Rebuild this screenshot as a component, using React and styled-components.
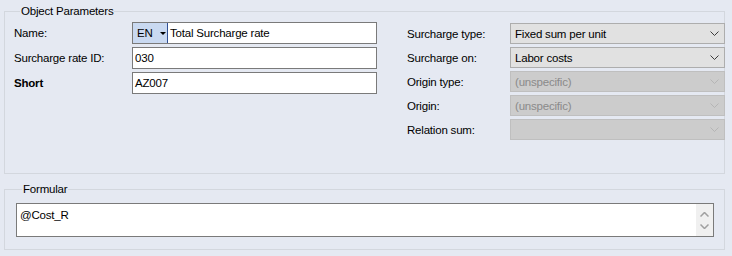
import React from "react";
import styled, { createGlobalStyle } from "styled-components";

const GlobalStyle = createGlobalStyle`
  html, body { margin: 0; padding: 0; }
  body {
    background: #e5e9f2;
    font-family: "Liberation Sans", Arial, sans-serif;
    font-size: 11.5px;
    letter-spacing: -0.2px;
    color: #000;
  }
  * { box-sizing: border-box; }
`;

const Page = styled.div`
  width: 732px;
  height: 256px;
  padding: 4px 7px 0 4px;
  display: flex;
  flex-direction: column;
  gap: 8px;
`;

const GroupBox = styled.fieldset`
  margin: 0;
  min-width: 0;
  border: 1px solid #d3d7de;
  padding: ${(p) => p.$pad};
  height: ${(p) => p.$height}px;
`;

const Legend = styled.legend`
  margin-left: 6px;
  padding: 0 1px;
  line-height: 14px;
  font-size: 11.5px;
`;

const Columns = styled.div`
  display: flex;
  align-items: flex-start;
`;

const Column = styled.div`
  display: flex;
  flex-direction: column;
  gap: 3px;
  width: ${(p) => (p.$width ? `${p.$width}px` : "auto")};
  flex: ${(p) => (p.$width ? "none" : "1")};
  margin-left: ${(p) => p.$offset || 0}px;
  margin-top: ${(p) => p.$top || 0}px;
  margin-right: ${(p) => p.$right || 0}px;
`;

const Row = styled.div`
  display: grid;
  grid-template-columns: ${(p) => p.$label}px 1fr;
  align-items: center;
  height: ${(p) => p.$h}px;
`;

const Label = styled.span`
  font-weight: ${(p) => (p.$bold ? 700 : 400)};
  white-space: nowrap;
`;

const Field = styled.div`
  height: 100%;
  background: #fff;
  border: 1px solid #7a7a7a;
  display: flex;
  align-items: center;
  padding: 0 ${(p) => (p.$flush ? 0 : 2)}px;
  white-space: nowrap;
  overflow: hidden;
`;

const LangButton = styled.div`
  height: 100%;
  width: 35px;
  background: #c9d9f1;
  border-right: 1px solid #2f4f96;
  display: flex;
  align-items: center;
  padding-left: 4px;
  gap: 7px;
  margin-right: 2px;
`;

const Triangle = styled.span`
  width: 0;
  height: 0;
  border-left: 3px solid transparent;
  border-right: 3px solid transparent;
  border-top: 3px solid #000;
  margin-top: 1px;
`;

const Combo = styled.div`
  height: 100%;
  background: ${(p) => (p.$disabled ? "#cccccc" : "#e1e1e1")};
  border: 1px solid ${(p) => (p.$disabled ? "#bfbfbf" : "#adadad")};
  color: ${(p) => (p.$disabled ? "#8a8a8a" : "#000")};
  display: flex;
  align-items: center;
  justify-content: space-between;
  padding: 0 5px 0 4px;
  white-space: nowrap;
`;

const Chevron = ({ color, up, width = 1 }) => (
  <svg width="9" height="5" viewBox="0 0 9 5" style={{ display: "block" }}>
    <polyline
      points={up ? "0.5,4.5 4.5,0.5 8.5,4.5" : "0.5,0.5 4.5,4.5 8.5,0.5"}
      fill="none"
      stroke={color}
      strokeWidth={width}
    />
  </svg>
);

const MemoBox = styled.div`
  height: 34px;
  background: #fff;
  border: 1px solid #7a7a7a;
  display: flex;
`;

const MemoText = styled.div`
  flex: 1;
  padding: 4px 3px;
  line-height: 14px;
`;

const ScrollBar = styled.div`
  width: 17px;
  background: #f0f0f0;
  display: flex;
  flex-direction: column;
  align-items: center;
  justify-content: space-around;
  padding: 5px 0 4px;
`;

const leftFields = [
  { label: "Surcharge rate ID:", value: "030" },
  { label: "Short", value: "AZ007", bold: true },
];

const rightFields = [
  { label: "Surcharge type:", value: "Fixed sum per unit" },
  { label: "Surcharge on:", value: "Labor costs" },
  { label: "Origin type:", value: "(unspecific)", disabled: true },
  { label: "Origin:", value: "(unspecific)", disabled: true },
  { label: "Relation sum:", value: "", disabled: true },
];

export default function App() {
  return (
    <>
      <GlobalStyle />
      <Page>
        <GroupBox $pad="4px 0 0 9px" $height={170}>
          <Legend>Object Parameters</Legend>
          <Columns>
            <Column $width={363}>
              <Row $label={118} $h={22}>
                <Label>Name:</Label>
                <Field $flush>
                  <LangButton>
                    <span>EN</span>
                    <Triangle />
                  </LangButton>
                  <span>Total Surcharge rate</span>
                </Field>
              </Row>
              {leftFields.map((f) => (
                <Row key={f.label} $label={118} $h={22}>
                  <Label $bold={f.bold}>{f.label}</Label>
                  <Field>{f.value}</Field>
                </Row>
              ))}
            </Column>
            <Column $offset={30} $top={1} $right={-1}>
              {rightFields.map((f) => (
                <Row key={f.label} $label={103} $h={21}>
                  <Label>{f.label}</Label>
                  <Combo $disabled={f.disabled}>
                    <span>{f.value}</span>
                    <Chevron color={f.disabled ? "#b5b5b5" : "#3c3c3c"} />
                  </Combo>
                </Row>
              ))}
            </Column>
          </Columns>
        </GroupBox>
        <GroupBox $pad="7px 10px 10px 11px" $height={68}>
          <Legend>Formular</Legend>
          <MemoBox>
            <MemoText>@Cost_R</MemoText>
            <ScrollBar>
              <Chevron color="#a0a0a0" up width={1.5} />
              <Chevron color="#a0a0a0" width={1.5} />
            </ScrollBar>
          </MemoBox>
        </GroupBox>
      </Page>
    </>
  );
}
